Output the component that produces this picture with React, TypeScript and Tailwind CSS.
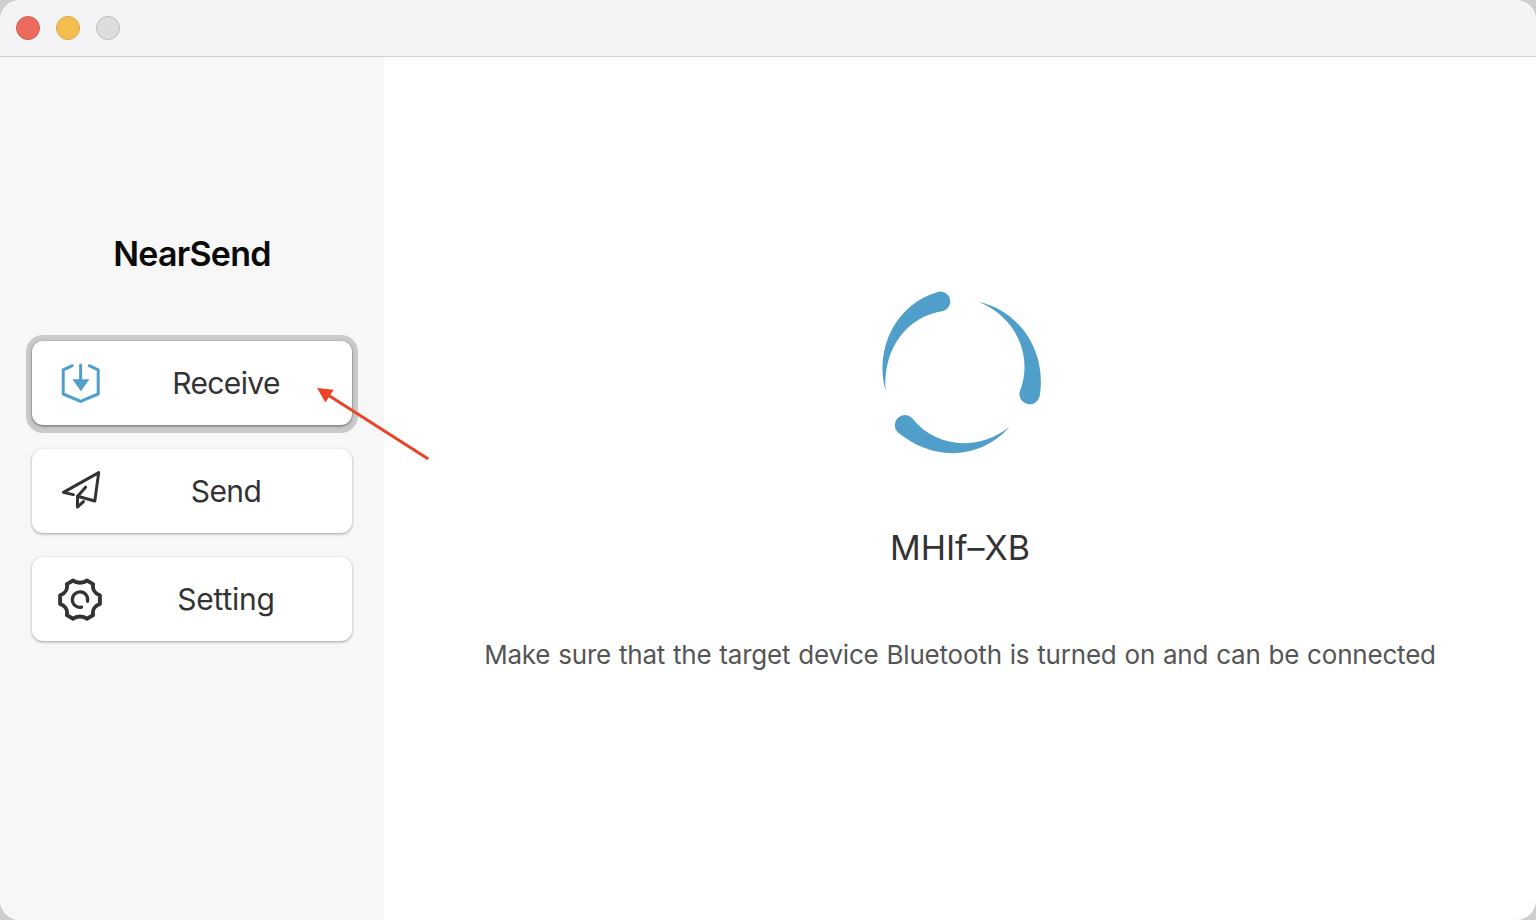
import React from "react";

function ReceiveIcon() {
  return (
    <svg className="h-11 w-11" viewBox="0 1 44 44" fill="none" stroke="#4f9fca" strokeWidth="3" strokeLinecap="round" strokeLinejoin="round">
      <path d="M14.3 5.7 5.2 9.9V34L22.6 41.4 40.2 34V9.9L31.2 5.7" />
      <path d="M22.6 5V22" />
      <path d="M14.4 19.2h17L22.9 31.2z" fill="#4f9fca" stroke="none" />
    </svg>
  );
}

function SendIcon() {
  return (
    <svg className="h-11 w-11" viewBox="0 0 44 44" fill="none" stroke="#333" strokeWidth="3" strokeLinecap="round" strokeLinejoin="round">
      <path d="M15.3 25.6 5.4 23.4 40.7 3.6 36.8 32 19.6 27.2 27.6 18.2" />
      <path d="M19.6 27.2 19.4 38.1 25.5 32.7" />
    </svg>
  );
}

function SettingIcon() {
  return (
    <svg className="h-11 w-11" viewBox="0 -0.6 44 44" fill="none" stroke="#333" strokeWidth="3.9" strokeLinecap="round" strokeLinejoin="round">
      <path d="M15.1 2.9C18.4 5.8 25.6 5.8 28.9 2.9L35.1 6.5C34.2 11.3 36.7 16 41.9 17.7V26.3C36.7 28 34.2 32.7 35.1 37.5L28.9 41.1C25.6 38.2 18.4 38.2 15.1 41.1L8.9 37.5C9.8 32.7 7.3 28 2.1 26.3V17.7C7.3 16 9.8 11.3 8.9 6.5Z" />
      <path d="M23.6 29.5A7.7 7.7 0 1 1 29.5 23.7" strokeWidth="3.2" />
    </svg>
  );
}

function Spinner() {
  return (
    <svg className="h-[190px] w-[190px]" viewBox="0 0 570 570" fill="#4f9fca">
      <path d="M47 332C12 206 77 72 205 35A30 30 0 0 1 220 93C112 108 37 206 47 332Z" />
      <path d="M326 66C447 90 532 215 509 349A30 30 0 0 1 449 335C490 236 443 111 326 66Z" />
      <path d="M419 441C327 542 188 544 83 457A30 30 0 0 1 126 414C196 503 321 515 419 441Z" />
    </svg>
  );
}

type NavButtonProps = {
  icon: React.ReactNode;
  label: string;
  labelClass: string;
  active?: boolean;
};

function NavButton({ icon, label, labelClass, active }: NavButtonProps) {
  return (
    <button
      className={`flex h-[84px] w-80 items-center rounded-[11px] bg-white pl-[26px] text-[#333] ${
        active
          ? "shadow-[0_1px_3px_rgba(0,0,0,0.5),0_0_0_6px_#cacaca,0_2px_0_6px_#cacaca]"
          : "shadow-[0_1px_3px_rgba(0,0,0,0.36)]"
      }`}
    >
      {icon}
      <span className="flex w-[248px] justify-center">
        <span className={`whitespace-nowrap text-[30px] leading-[40px] ${labelClass}`}>{label}</span>
      </span>
    </button>
  );
}

export default function App() {
  return (
    <div className="h-[920px] w-[1536px] overflow-hidden bg-[#cfcfcf] font-['Inter','Liberation_Sans',sans-serif]">
      <div className="relative flex h-full flex-col overflow-hidden rounded-[20px] bg-white">
        <header className="flex h-[57px] shrink-0 items-center gap-4 border-b border-[#d2d2d4] bg-[#f4f4f6] pl-4">
          <span className="h-6 w-6 rounded-full border border-[#d65a50] bg-[#ed6a5f]" />
          <span className="h-6 w-6 rounded-full border border-[#d8a442] bg-[#f5bf4f]" />
          <span className="h-6 w-6 rounded-full border border-[#bcbcbe] bg-[#dcdcde]" />
        </header>
        <div className="flex min-h-0 flex-1">
          <aside className="flex w-96 flex-col items-center bg-[#f7f7f7] pt-[172px]">
            <h1 className="h-12 whitespace-nowrap text-[34px] font-semibold leading-[49px] tracking-[-0.75px] text-[#0a0a0a]">NearSend</h1>
            <nav className="mt-16 flex flex-col gap-6">
              <NavButton icon={<ReceiveIcon />} label="Receive" labelClass="tracking-[-0.65px]" active />
              <NavButton icon={<SendIcon />} label="Send" labelClass="tracking-[-0.6px]" />
              <NavButton icon={<SettingIcon />} label="Setting" labelClass="tracking-[-0.2px]" />
            </nav>
          </aside>
          <main className="flex flex-1 flex-col items-center pt-[223px]">
            <div className="pl-[10px]">
              <Spinner />
            </div>
            <p className="mt-[54px] whitespace-nowrap text-[34px] leading-[48px] text-[#333] [font-feature-settings:'calt'_0]">MHIf–XB</p>
            <p className="mt-[63px] whitespace-nowrap text-[26px] leading-[40px] tracking-[-0.2px] text-[#555] [word-spacing:0.8px]">
              Make sure that the target device Bluetooth is turned on and can be connected
            </p>
          </main>
        </div>
        <svg className="pointer-events-none absolute left-[310px] top-[380px] h-[90px] w-[125px]" viewBox="310 380 125 90">
          <path d="M328 395 428.3 459" stroke="#ea4426" strokeWidth="3" />
          <path d="M317 388 333.7 389.8 325.5 402.4Z" fill="#ea4426" />
        </svg>
      </div>
    </div>
  );
}
